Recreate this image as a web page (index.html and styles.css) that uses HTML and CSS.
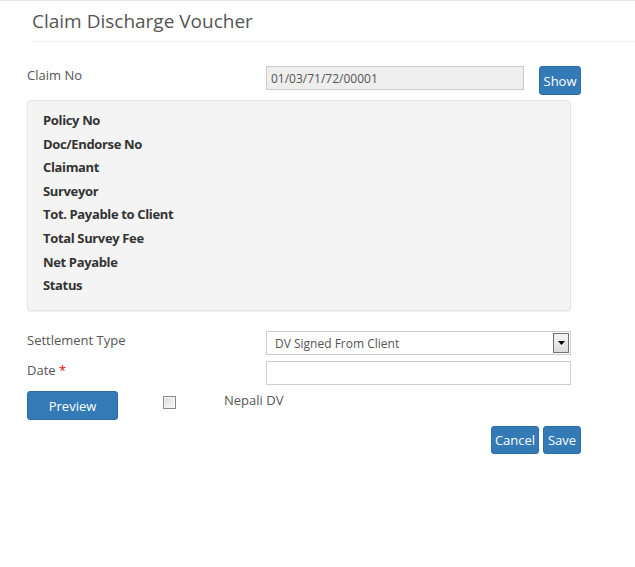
FILE: index.html
```html
<!DOCTYPE html>
<html>
<head>
<meta charset="utf-8">
<link rel="stylesheet" href="styles.css">
</head>
<body>
<div class="page">
  <div class="header"><h1>Claim Discharge Voucher</h1></div>
  <div class="content">
    <div class="row claim-row">
      <label class="lbl">Claim No</label>
      <input class="ctrl readonly" type="text" value="01/03/71/72/00001" readonly>
      <button class="btn show-btn">Show</button>
    </div>
    <div class="well">
      <div class="item">Policy No</div>
      <div class="item">Doc/Endorse No</div>
      <div class="item">Claimant</div>
      <div class="item">Surveyor</div>
      <div class="item">Tot. Payable to Client</div>
      <div class="item">Total Survey Fee</div>
      <div class="item">Net Payable</div>
      <div class="item">Status</div>
    </div>
    <div class="row settle-row">
      <label class="lbl">Settlement Type</label>
      <div class="ctrl select">
        <span>DV Signed From Client</span>
        <span class="arrow"><svg width="7" height="4" viewBox="0 0 7 4"><path d="M0 0h7L3.5 4z" fill="#000"/></svg></span>
      </div>
    </div>
    <div class="row date-row">
      <label class="lbl">Date <span class="req">*</span></label>
      <input class="ctrl" type="text">
    </div>
    <div class="row preview-row">
      <button class="btn preview-btn">Preview</button>
      <span class="chk"></span>
      <span class="nepali">Nepali DV</span>
    </div>
    <div class="actions">
      <button class="btn cancel-btn">Cancel</button>
      <button class="btn save-btn">Save</button>
    </div>
  </div>
</div>
</body>
</html>
```

FILE: styles.css
```css
* { box-sizing: border-box; }
html, body { margin: 0; padding: 0; background: #fff; }
body {
  font-family: "Open Sans", "Liberation Sans", sans-serif;
  font-size: 13px;
  color: #555;
  border-top: 1px solid #e6e6e6;
}
.header {
  margin-left: 32px;
  height: 41px;
  border-bottom: 1px solid #eee;
}
.header h1 {
  margin: 0;
  padding-top: 7px;
  font-size: 19px;
  font-weight: 400;
  line-height: 26px;
  color: #555;
}
.content {
  padding-left: 27px;
  width: 581px;
}
.row { display: flex; align-items: flex-start; }
.lbl {
  width: 239px;
  flex: none;
  line-height: 18px;
  color: #555;
}
.claim-row { margin-top: 24px; }
.ctrl {
  height: 24px;
  border: 1px solid #ccc;
  font-family: inherit;
  font-size: 12px;
  color: #555;
  padding: 0 8px;
  outline: none;
  background: #fff;
}
.readonly { width: 258px; background: #eee; padding: 0 4px; }
.btn {
  font-family: inherit;
  font-size: 13px;
  color: #fff;
  background: #337ab7;
  border: 1px solid #2e6da4;
  border-radius: 3px;
  padding: 0;
  cursor: pointer;
}
.show-btn { width: 42px; height: 29px; margin-left: 15px; }
.well {
  margin-top: 5px;
  width: 544px;
  height: 211px;
  background: #f4f4f4;
  border: 1px solid #e3e3e3;
  border-radius: 4px;
  box-shadow: 0 1px 1px rgba(0,0,0,0.05);
  padding: 8px 15px;
}
.item {
  font-weight: 700;
  color: #333;
  line-height: 23.6px;
  letter-spacing: -0.35px;
}
.settle-row { margin-top: 20px; }
.select {
  width: 305px;
  display: flex;
  align-items: center;
  justify-content: space-between;
  padding: 0 1px 0 8px;
  font-size: 12px;
}
.arrow {
  width: 16px;
  height: 20px;
  border: 1px solid #707070;
  background: linear-gradient(#f4f4f4, #dcdcdc);
  display: flex;
  align-items: center;
  justify-content: center;
}
.date-row { margin-top: 6px; }
.date-row .ctrl { width: 305px; }
.req { color: #e00; }
.preview-row { margin-top: 6px; align-items: center; }
.preview-btn { width: 91px; height: 29px; }
.chk {
  width: 13px;
  height: 13px;
  margin-left: 45px;
  border: 1px solid #8a8a8a;
  background: linear-gradient(135deg, #dcdcdc, #fafafa);
  box-shadow: inset 0 0 0 1px #f5f5f5;
  margin-top: -6px;
}
.nepali { margin-left: 48px; margin-top: -12px; color: #555; }
.actions {
  display: flex;
  justify-content: flex-end;
  gap: 4px;
  margin-top: 6px;
}
.cancel-btn { width: 48px; height: 28px; }
.save-btn { width: 38px; height: 28px; }
```
